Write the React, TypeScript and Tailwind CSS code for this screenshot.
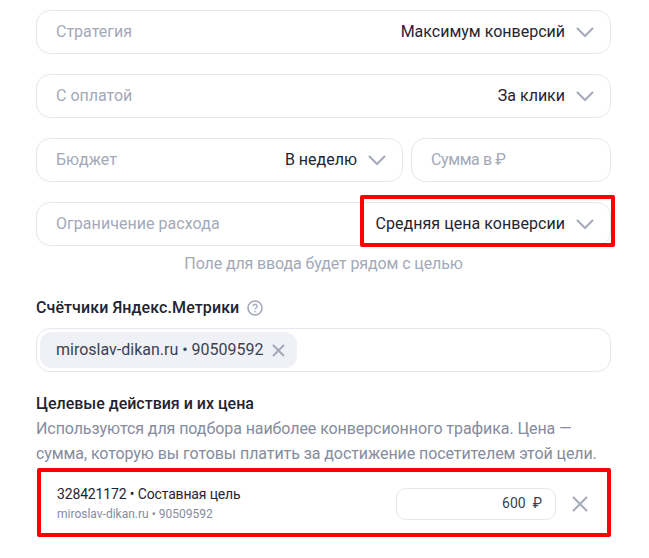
import React from "react";

const Chevron = () => (
  <svg width="18" height="10" viewBox="0 0 18 10" fill="none" className="shrink-0">
    <path d="M1 1l8 8 8-8" stroke="#a3a9b8" strokeWidth="2" />
  </svg>
);

const Field = ({ label, value, className = "" }: { label: string; value?: string; className?: string }) => (
  <div className={"flex h-[44px] items-center justify-between rounded-[14px] border border-[#e4e6f0] pl-[19px] pr-[16px] " + className}>
    <span className="text-[#a3a9b8]">{label}</span>
    {value && (
      <span className="flex items-center gap-[11px] text-[#1f2433]">
        {value}
        <Chevron />
      </span>
    )}
  </div>
);

export default function App() {
  return (
    <div className="h-[558px] w-[649px] overflow-hidden bg-white pl-[36px] pr-[38px] pt-[10px] font-['Roboto',sans-serif] text-[16px]">
      <div className="flex flex-col gap-[20px]">
        <Field label="Стратегия" value="Максимум конверсий" />
        <Field label="С оплатой" value="За клики" />
        <div className="flex gap-[8px]">
          <Field label="Бюджет" value="В неделю" className="flex-1" />
          <Field label="Сумма в ₽" className="w-[200px] tracking-[-0.4px]" />
        </div>
        <div className="relative">
          <Field label="Ограничение расхода" value="Средняя цена конверсии" className="tracking-[0.05px]" />
          <div className="absolute left-[324px] top-[-7px] h-[52px] w-[255px] rounded-[2px] border-[4px] border-[#ff0000]" />
        </div>
      </div>
      <div className="mt-[7px] text-center text-[16px] leading-[22px] tracking-[-0.12px] text-[#a3a9b8]">Поле для ввода будет рядом с целью</div>
      <div className="mt-[23px] flex items-center gap-[8px] font-medium leading-[20px] tracking-[0.1px] text-[#1f2433]">
        Счётчики Яндекс.Метрики
        <svg width="16" height="16" viewBox="0 0 16 16" fill="none">
          <circle cx="8" cy="8" r="7" stroke="#a3a9b8" strokeWidth="1.6" />
          <path d="M6 6.3a2 2 0 1 1 3 1.7c-.7.4-1 .8-1 1.6" stroke="#a3a9b8" strokeWidth="1.3" />
          <circle cx="8" cy="11.6" r=".8" fill="#a3a9b8" />
        </svg>
      </div>
      <div className="mt-[10px] flex h-[44px] items-center rounded-[14px] border border-[#e4e6f0] pl-[3px]">
        <div className="flex h-[36px] items-center gap-[8px] rounded-[12px] bg-[#eff1f6] pl-[16px] pr-[12px] text-[#3b4252]">
          miroslav-dikan.ru • 90509592
          <svg width="13" height="13" viewBox="0 0 13 13" fill="none">
            <path d="M1 1l11 11M12 1L1 12" stroke="#a3a9b8" strokeWidth="2" />
          </svg>
        </div>
      </div>
      <div className="mt-[22px] font-medium leading-[20px] text-[#1f2433]">Целевые действия и их цена</div>
      <div className="mt-[2px] text-[16px] leading-[25px] tracking-[-0.08px] text-[#858c9e]">
        Используются для подбора наиболее конверсионного трафика. Цена — сумма, которую вы готовы платить за достижение посетителем этой цели.
      </div>
      <div className="ml-[1px] mt-[2px] flex h-[69px] w-[574px] items-center justify-between rounded-[2px] border-[4px] border-[#ff0000] pl-[16px] pr-[19px]">
        <div className="mt-[1px]">
          <div className="text-[14px] leading-[20px] tracking-[-0.15px] text-[#1f2433]">328421172 • Составная цель</div>
          <div className="mt-[1px] text-[12px] leading-[18px] text-[#858c9e]">miroslav-dikan.ru • 90509592</div>
        </div>
        <div className="mt-[2px] flex items-center gap-[16px]">
          <div className="flex h-[32px] w-[160px] items-center justify-end gap-[7px] rounded-[10px] border border-[#e4e6f0] pr-[13px] text-[14px] text-[#3b4252]">
            <span>600</span>
            <span>₽</span>
          </div>
          <svg width="16" height="16" viewBox="0 0 16 16" fill="none">
            <path d="M1 1l14 14M15 1L1 15" stroke="#a3a9b8" strokeWidth="2" />
          </svg>
        </div>
      </div>
    </div>
  );
}
